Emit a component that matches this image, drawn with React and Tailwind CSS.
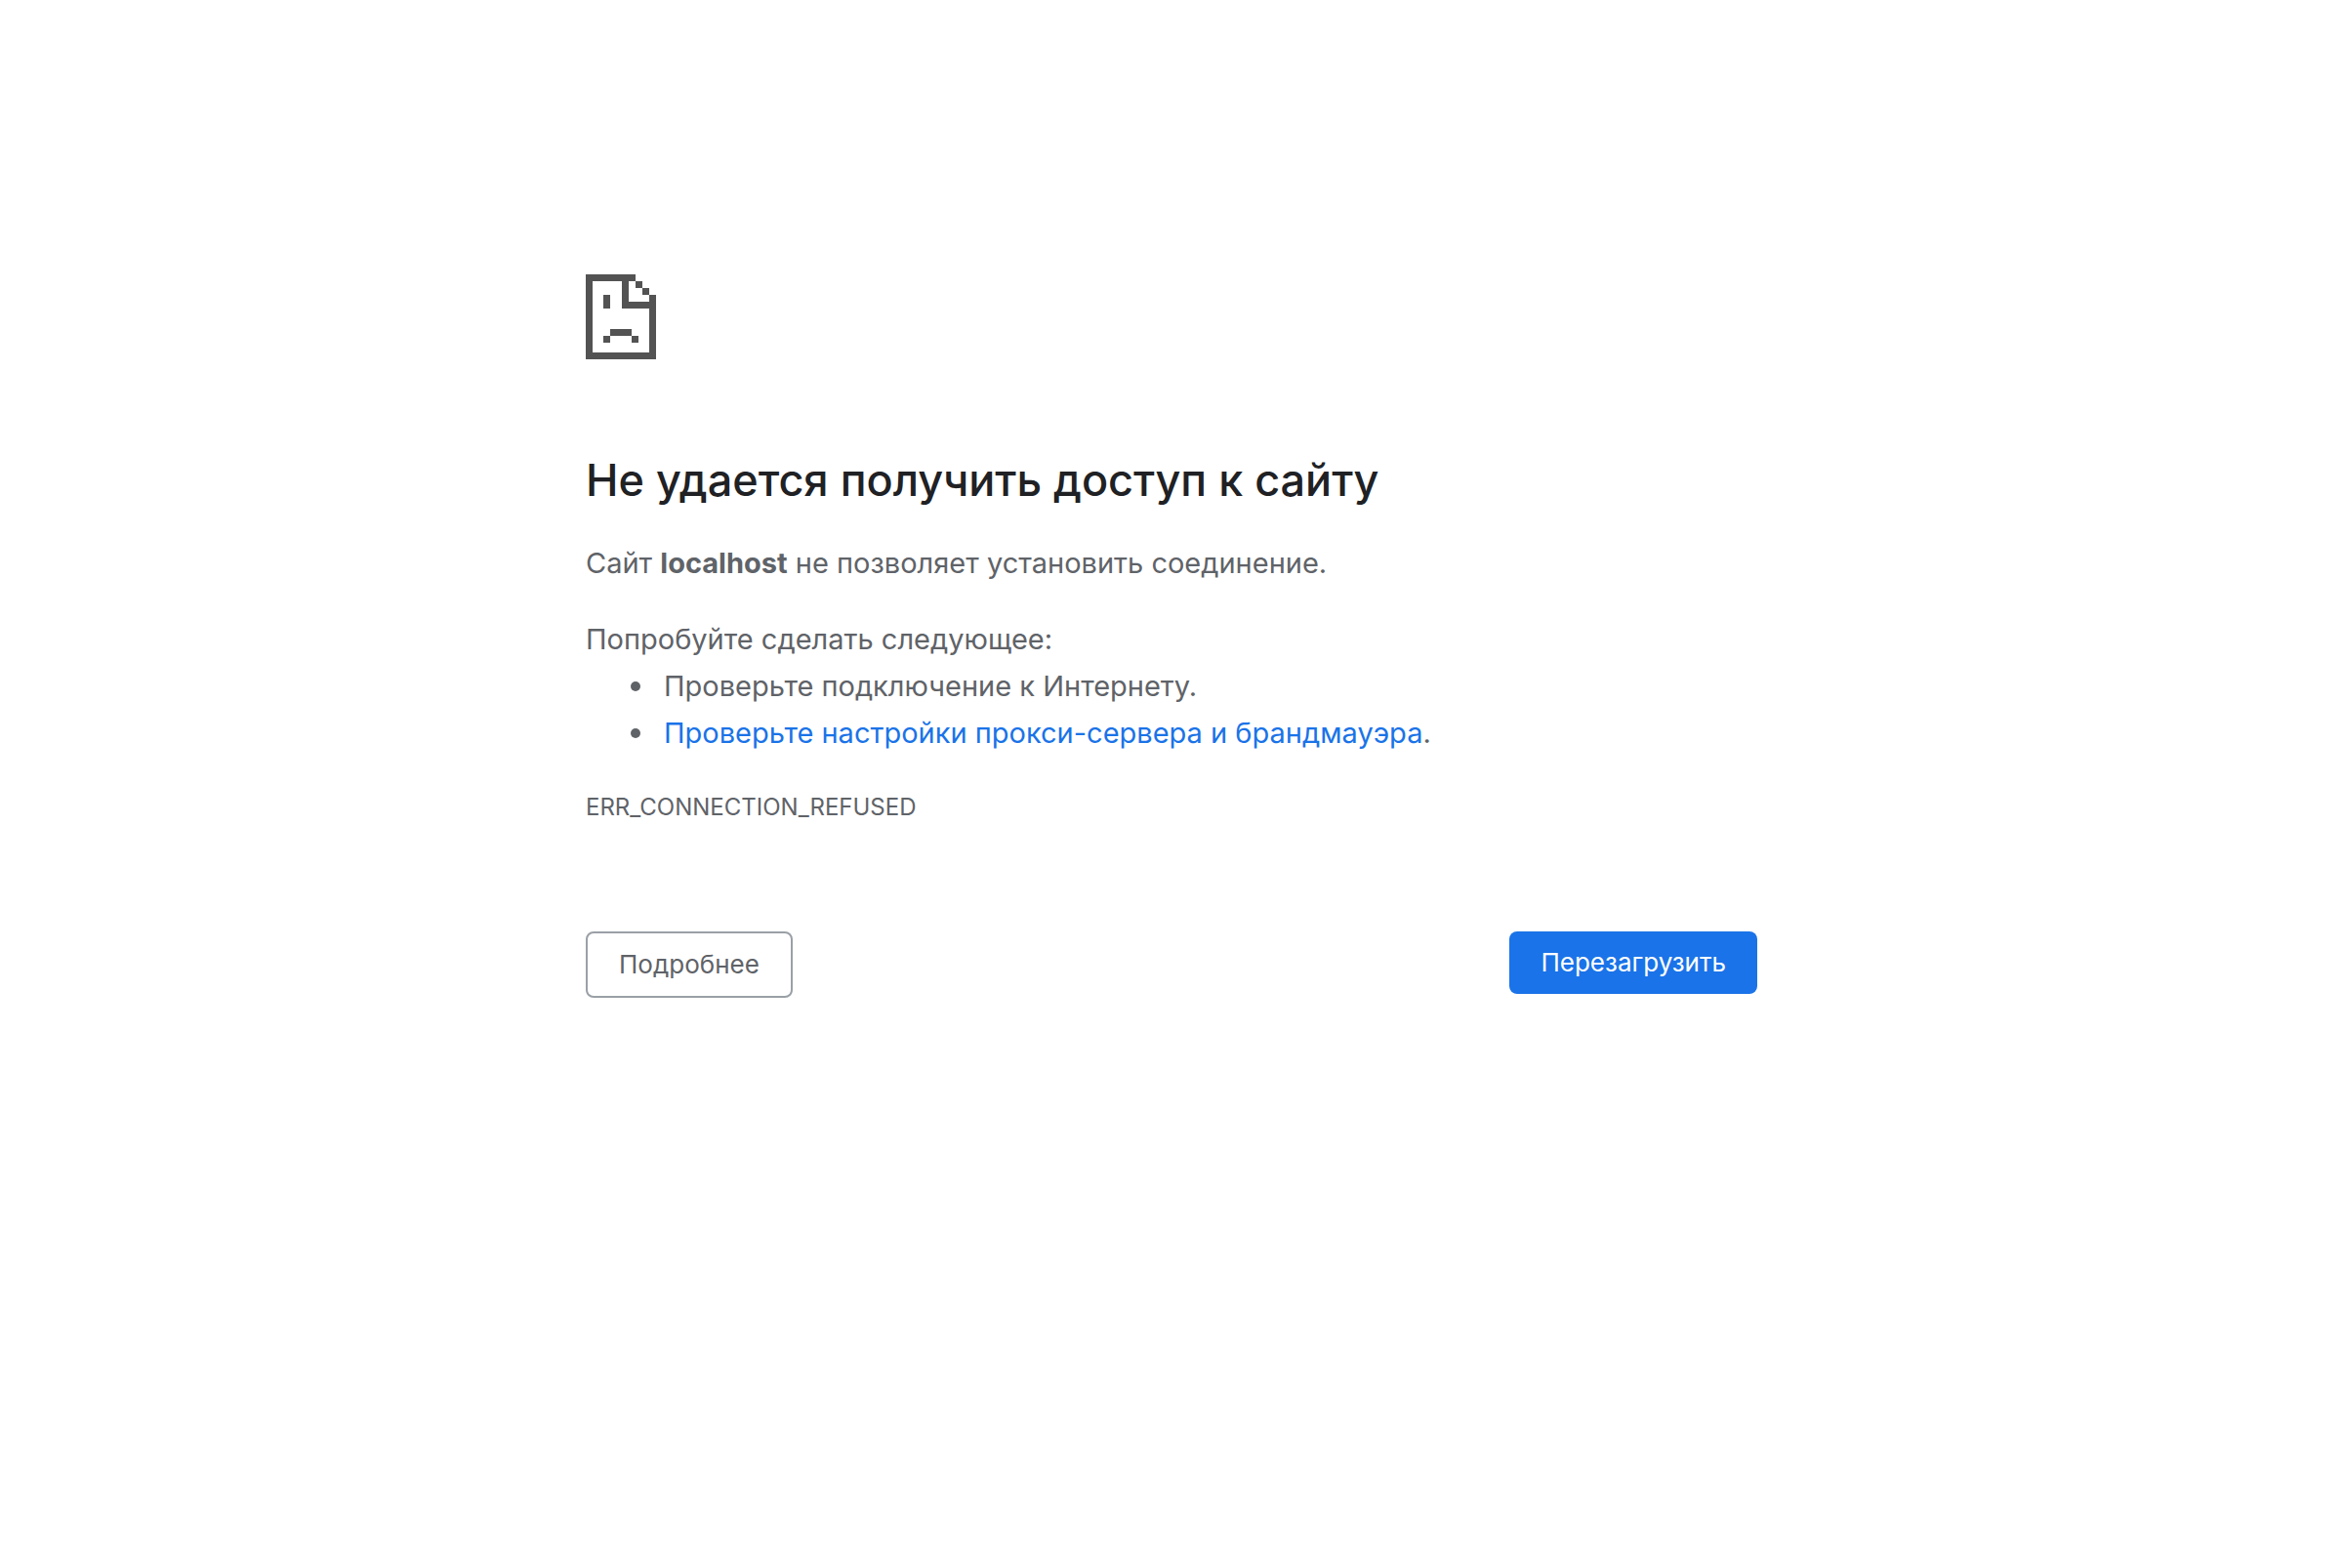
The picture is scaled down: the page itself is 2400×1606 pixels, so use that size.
function SadPage() {
  return (
    <svg className="h-[87px] w-[72px]" viewBox="0 0 72 87" fill="#535353" shapeRendering="crispEdges" aria-hidden="true">
      <path d="M0 0h51v7h-7v21h21v-7h7v66H0zM7 7v73h58V35H37V7z" fillRule="evenodd" />
      <path d="M51 7h7v7h-7zM58 14h7v7h-7z" />
      <path d="M18 21h7v14h-7zM25 56h22v7H25zM18 63h7v7h-7zM47 63h7v7h-7z" />
    </svg>
  );
}

function Suggestion({ children }) {
  return (
    <li className="flex items-center gap-6 before:size-[10px] before:shrink-0 before:rounded-full before:bg-current before:content-['']">
      <span>{children}</span>
    </li>
  );
}

export default function App() {
  return (
    <main className="mx-auto w-full max-w-[1200px] pt-[281px] font-['Inter',sans-serif] text-[29px] leading-[48px] text-[#5f6368]">
      <SadPage />
      <h1 className="mt-[94px] text-[45px] leading-[60px] font-medium text-[#202124]">Не удается получить доступ к сайту</h1>
      <p className="mt-[31px]">
        Сайт <strong className="font-bold">localhost</strong> не позволяет установить соединение.
      </p>
      <div className="mt-[30px]">
        <p>Попробуйте сделать следующее:</p>
        <ul className="pl-[46px]">
          <Suggestion>Проверьте подключение к Интернету.</Suggestion>
          <Suggestion>
            <a href="#proxy" className="text-[#1a73e8]">Проверьте настройки прокси-сервера и брандмауэра</a>.
          </Suggestion>
        </ul>
      </div>
      <p className="mt-7 text-2xl leading-[48px]">ERR_CONNECTION_REFUSED</p>
      <div className="mt-[103px] flex items-start justify-between text-[26px] leading-8">
        <button type="button" className="rounded-lg border-2 border-[#9aa0a6] px-8 py-4">Подробнее</button>
        <button type="button" className="rounded-lg bg-[#1a73e8] px-8 py-4 text-white">Перезагрузить</button>
      </div>
    </main>
  );
}
